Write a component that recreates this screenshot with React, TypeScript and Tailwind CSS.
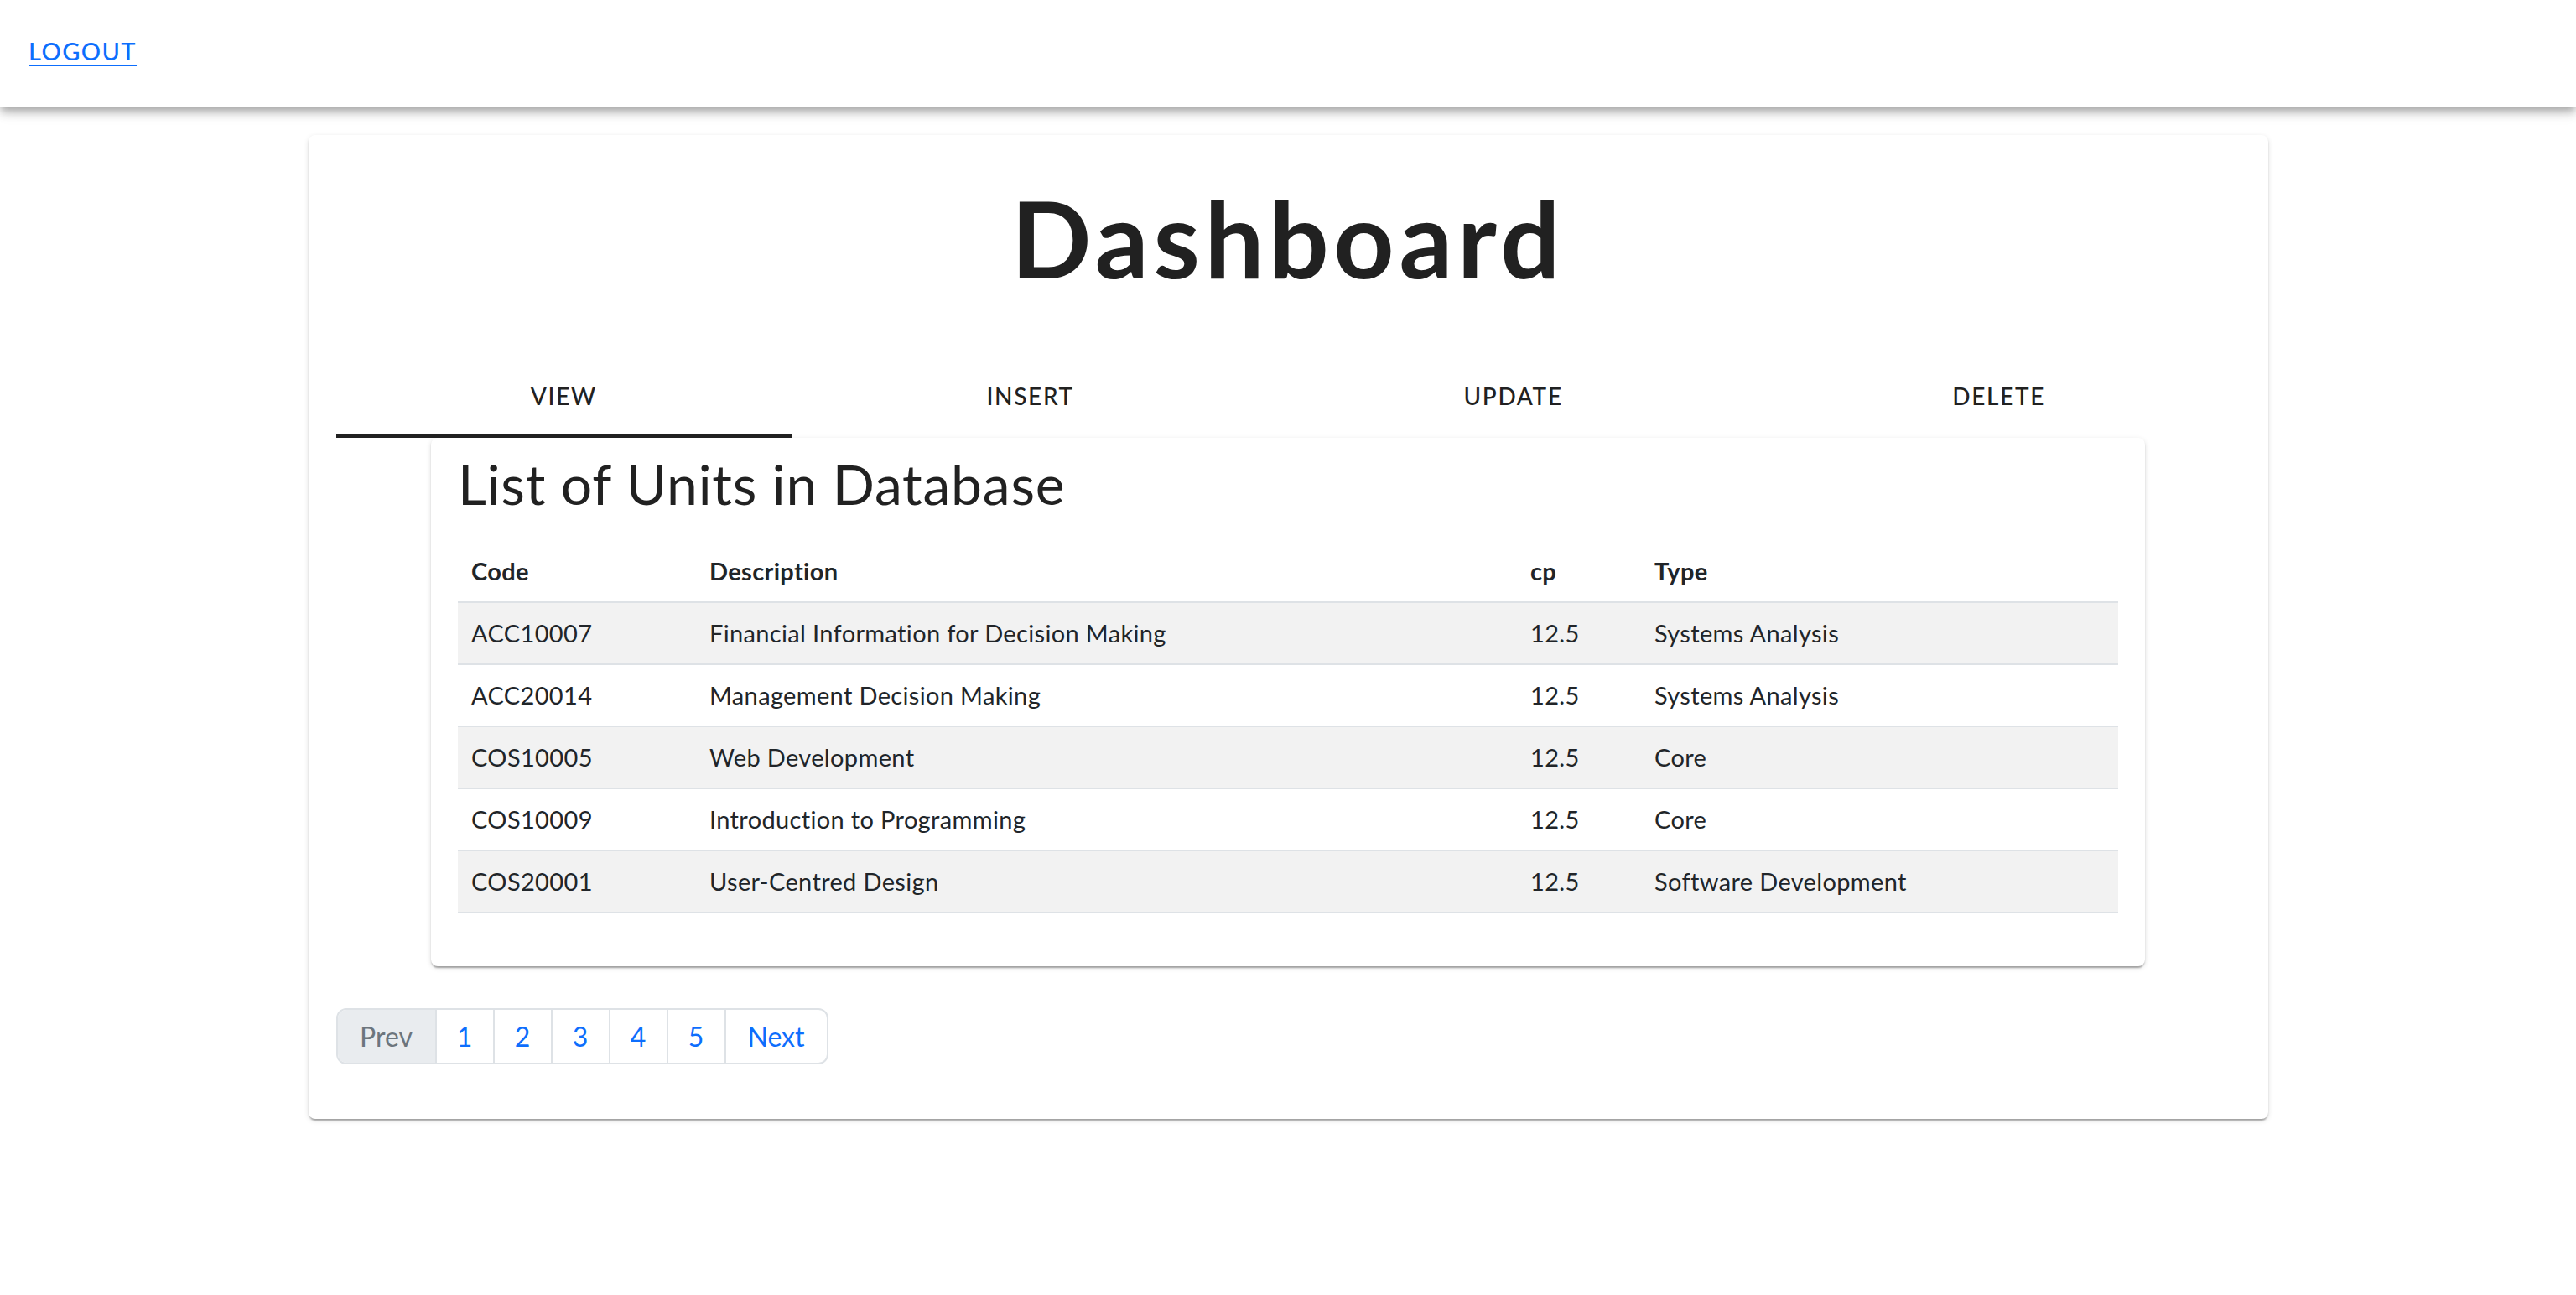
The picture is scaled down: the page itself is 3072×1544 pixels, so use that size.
import { useState } from "react";

const units = [
  { code: "ACC10007", description: "Financial Information for Decision Making", cp: "12.5", type: "Systems Analysis" },
  { code: "ACC20014", description: "Management Decision Making", cp: "12.5", type: "Systems Analysis" },
  { code: "COS10005", description: "Web Development", cp: "12.5", type: "Core" },
  { code: "COS10009", description: "Introduction to Programming", cp: "12.5", type: "Core" },
  { code: "COS20001", description: "User-Centred Design", cp: "12.5", type: "Software Development" },
];

const tabs = ["View", "Insert", "Update", "Delete"];

export default function App() {
  const [tab, setTab] = useState(0);

  return (
    <div className="min-h-screen bg-white text-[#212121] font-['Lato',sans-serif]">
      {/* top bar */}
      <header className="h-[128px] flex items-center pl-[34px] pb-[6px] bg-white shadow-[0_4px_8px_-2px_rgba(0,0,0,0.2),0_8px_10px_0_rgba(0,0,0,0.14),0_2px_20px_0_rgba(0,0,0,0.12)]">
        <a href="#" className="text-[29px] font-medium uppercase tracking-[0.05em] text-[#0d6efd] underline underline-offset-[5px] decoration-2">
          Logout
        </a>
      </header>

      <main className="flex justify-center pt-[33px] pb-20">
        <div className="w-[2337px] bg-white rounded-[8px] px-[33px] pt-[32px] pb-[65px] shadow-[0_4px_2px_-2px_rgba(0,0,0,0.2),0_2px_2px_0_rgba(0,0,0,0.14),0_2px_6px_0_rgba(0,0,0,0.12)]">
          <h1 className="h-[180px] mb-[53px] flex items-center justify-center text-[126px] font-bold tracking-[0.045em]">
            Dashboard
          </h1>

          <div className="flex h-[96px]">
            {tabs.map((t, i) => (
              <button
                key={t}
                onClick={() => setTab(i)}
                className={
                  "flex-auto min-w-[180px] px-6 flex items-center justify-center text-[28px] font-medium uppercase tracking-[0.06em] border-b-4 " +
                  (tab === i ? "border-[#212121]" : "border-transparent")
                }
              >
                {t}
              </button>
            ))}
          </div>

          <div className="mx-auto w-[2044px] bg-white rounded-[8px] px-8 pt-[10px] pb-[63px] shadow-[0_4px_2px_-2px_rgba(0,0,0,0.2),0_2px_2px_0_rgba(0,0,0,0.14),0_2px_6px_0_rgba(0,0,0,0.12)]">
            <h2 className="h-[88px] flex items-center text-[66px] font-normal tracking-[0.012em]">List of Units in Database</h2>

            <table className="mt-[25px] w-full table-fixed border-collapse text-[29px] tracking-[0.012em] text-[#212529]">
              <thead>
                <tr className="border-b-2 border-[#dee2e6]">
                  <th className="w-[284px] px-4 py-4 leading-[40px] text-left font-bold">Code</th>
                  <th className="w-[979px] px-4 py-4 leading-[40px] text-left font-bold">Description</th>
                  <th className="w-[148px] px-4 py-4 leading-[40px] text-left font-bold">cp</th>
                  <th className="px-4 py-4 leading-[40px] text-left font-bold">Type</th>
                </tr>
              </thead>
              <tbody>
                {units.map((u, i) => (
                  <tr key={u.code} className={"border-b-2 border-[#dee2e6] " + (i % 2 === 0 ? "bg-[#f2f2f2]" : "bg-white")}>
                    <td className="px-4 py-4 leading-[40px]">{u.code}</td>
                    <td className="px-4 py-4 leading-[40px]">{u.description}</td>
                    <td className="px-4 py-4 leading-[40px]">{u.cp}</td>
                    <td className="px-4 py-4 leading-[40px]">{u.type}</td>
                  </tr>
                ))}
              </tbody>
            </table>
          </div>

          <nav className="mt-[50px] flex">
            <div className="flex h-[67px] rounded-[12px] border-2 border-[#dee2e6] overflow-hidden text-[32px]">
              <span className="w-[116px] flex items-center justify-center bg-[#e9ecef] text-[#6c757d]">Prev</span>
              {[1, 2, 3, 4, 5].map((n) => (
                <a key={n} href="#" className="w-[69px] flex items-center justify-center border-l-2 border-[#dee2e6] text-[#0d6efd]">
                  {n}
                </a>
              ))}
              <a href="#" className="w-[122px] flex items-center justify-center border-l-2 border-[#dee2e6] text-[#0d6efd]">
                Next
              </a>
            </div>
          </nav>
        </div>
      </main>
    </div>
  );
}
